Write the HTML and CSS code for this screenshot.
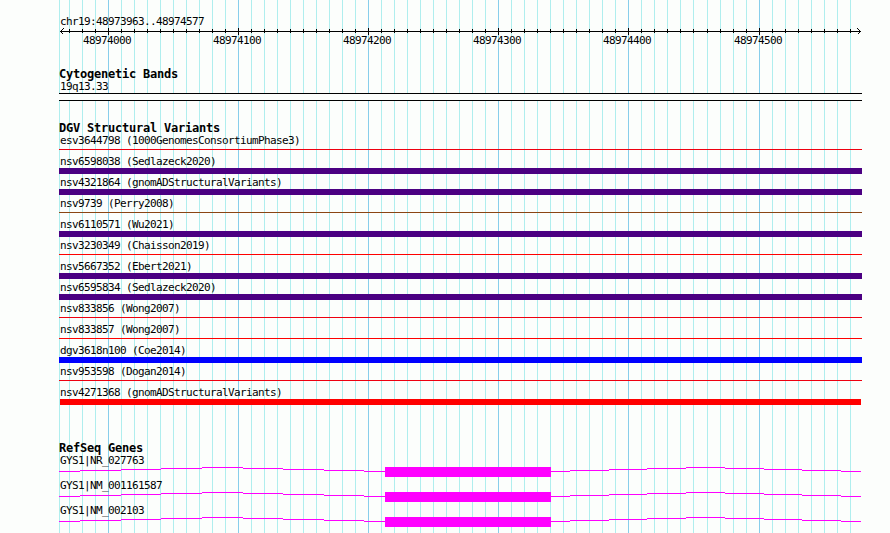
FILE: index.html
```
<!DOCTYPE html>
<html lang="en">
<head>
    <meta charset="UTF-8">
    <meta name="viewport" content="width=device-width, initial-scale=1.0">
    <title>chr19:48973963..48974577</title>
    <link rel="stylesheet" href="styles.css">
</head>
<body>
    <div class="browser">
        <!-- vertical grid behind all tracks -->
        <svg class="grid" id="grid" width="803" height="533"></svg>

        <div class="ruler">
            <div class="label">chr19:48973963..48974577</div>
            <svg class="axis" id="axis" width="803" height="8"></svg>
            <div class="positions">
                <span>48974000</span>
                <span>48974100</span>
                <span>48974200</span>
                <span>48974300</span>
                <span>48974400</span>
                <span>48974500</span>
            </div>
        </div>

        <div class="track cytobands">
            <h2>Cytogenetic Bands</h2>
            <div class="label">19q13.33</div>
            <div class="band"></div>
        </div>

        <div class="track variants">
            <h2>DGV Structural Variants</h2>
            <div class="feature"><div class="label">esv3644798 (1000GenomesConsortiumPhase3)</div><div class="line crimson"></div></div>
            <div class="feature"><div class="label">nsv6598038 (Sedlazeck2020)</div><div class="bar indigo"></div></div>
            <div class="feature"><div class="label">nsv4321864 (gnomADStructuralVariants)</div><div class="bar indigo"></div></div>
            <div class="feature"><div class="label">nsv9739 (Perry2008)</div><div class="line brown"></div></div>
            <div class="feature"><div class="label">nsv6110571 (Wu2021)</div><div class="bar indigo"></div></div>
            <div class="feature"><div class="label">nsv3230349 (Chaisson2019)</div><div class="line red"></div></div>
            <div class="feature"><div class="label">nsv5667352 (Ebert2021)</div><div class="bar indigo"></div></div>
            <div class="feature"><div class="label">nsv6595834 (Sedlazeck2020)</div><div class="bar indigo"></div></div>
            <div class="feature"><div class="label">nsv833856 (Wong2007)</div><div class="line crimson"></div></div>
            <div class="feature"><div class="label">nsv833857 (Wong2007)</div><div class="line red"></div></div>
            <div class="feature"><div class="label">dgv3618n100 (Coe2014)</div><div class="bar blue"></div></div>
            <div class="feature"><div class="label">nsv953598 (Dogan2014)</div><div class="line crimson"></div></div>
            <div class="feature"><div class="label">nsv4271368 (gnomADStructuralVariants)</div><div class="bar red inset"></div></div>
        </div>

        <div class="track genes">
            <h2>RefSeq Genes</h2>
            <div class="gene"><div class="label">GYS1|NR_027763</div><svg class="model" width="803" height="10"></svg></div>
            <div class="gene"><div class="label">GYS1|NM_001161587</div><svg class="model" width="803" height="10"></svg></div>
            <div class="gene"><div class="label">GYS1|NM_002103</div><svg class="model" width="803" height="10"></svg></div>
        </div>
    </div>

    <script>
        // x positions of the grid lines, one every 10 bp
        const lines = [{ x: 0, major: false, edge: true }];
        for (let i = -3; i <= 57; i++) {
            const x = 49 + i * 13 + (i > 45 ? 1 : 0);
            lines.push({ x: x, major: i % 10 === 0 });
        }

        function rect(x, y, w, h, cls) {
            return `<rect x="${x}" y="${y}" width="${w}" height="${h}" class="${cls}"/>`;
        }

        let grid = '';
        let axis = rect(1, 3, 801, 1, 'ink');
        lines.forEach(l => {
            grid += rect(l.x, 0, 1, 533, l.major ? 'major' : 'minor');
            if (l.edge) return; // no tick at the left edge
            axis += l.major ? rect(l.x, 0, 1, 7, 'ink') : rect(l.x, 1, 1, 4, 'ink');
        });
        axis += '<path class="arrow" d="M4.5 0.5L1.5 3.5L4.5 6.5M798.5 0.5L801.5 3.5L798.5 6.5"/>';
        document.getElementById('grid').innerHTML = grid;
        document.getElementById('axis').innerHTML = axis;

        // introns are stepped arcs: [start, end, row]
        const steps = [
            [0, 21, 4], [21, 62, 3], [62, 102, 2], [102, 143, 1], [143, 184, 0],
            [184, 224, 1], [224, 265, 2], [265, 305, 3], [305, 326, 4],
            [492, 511, 4], [511, 550, 3], [550, 588, 2], [588, 627, 1], [627, 666, 0],
            [666, 705, 1], [705, 743, 2], [743, 782, 3], [782, 802, 4]
        ];
        document.querySelectorAll('.model').forEach(svg => {
            let out = rect(326, 0, 166, 10, 'exon');
            steps.forEach(s => out += rect(s[0], s[2], s[1] - s[0], 1, 'exon'));
            svg.innerHTML = out;
        });
    </script>
</body>
</html>
```
FILE: styles.css
```
body {
    margin: 0;
    background-color: #fcfefc;
    color: #000;
    font-family: "DejaVu Sans Mono", monospace;
    overflow: hidden;
}
svg {
    display: block;
    shape-rendering: crispEdges;
    overflow: visible;
}
.browser {
    position: relative;
    width: 803px;
    height: 533px;
    margin-left: 59px;
}
.grid {
    position: absolute;
    top: 0;
    left: 0;
    z-index: -1;
}
.minor {
    fill: #afeeee;
}
.major {
    fill: #87ceeb;
}
.ink {
    fill: #000;
}
.arrow {
    fill: none;
    stroke: #000;
}
.label {
    height: 12px;
    padding-left: 1px;
    font-size: 11px;
    line-height: 11px;
    letter-spacing: -0.622px;
    white-space: pre;
}
h2 {
    height: 13px;
    margin: 0;
    font-size: 12px;
    line-height: 12px;
    letter-spacing: -0.224px;
    white-space: pre;
}
.ruler {
    padding-top: 16px;
    height: 52px;
}
.positions {
    display: flex;
    gap: 82px;
    padding-left: 24px;
    font-size: 11px;
    line-height: 9px;
    letter-spacing: -0.622px;
}
.positions span {
    width: 48px;
}
.positions span:last-child {
    padding-left: 1px;
}

/* tracks */
.cytobands {
    height: 54px;
}
.band {
    height: 6px;
    border-top: 1px solid #000;
    border-bottom: 1px solid #000;
    background-color: #fcfefc;
}
.variants {
    height: 320px;
}
.feature {
    height: 21px;
}
.line {
    height: 1px;
    margin-top: 2px;
}
.bar {
    height: 6px;
}
.inset {
    margin: 0 1px;
}
.indigo {
    background-color: #4b0082;
}
.crimson {
    background-color: #ee0010;
}
.red {
    background-color: #f00;
}
.brown {
    background-color: #8b4513;
}
.blue {
    background-color: #00f;
}
.gene {
    height: 25px;
}
.exon {
    fill: #f0f;
}
```
